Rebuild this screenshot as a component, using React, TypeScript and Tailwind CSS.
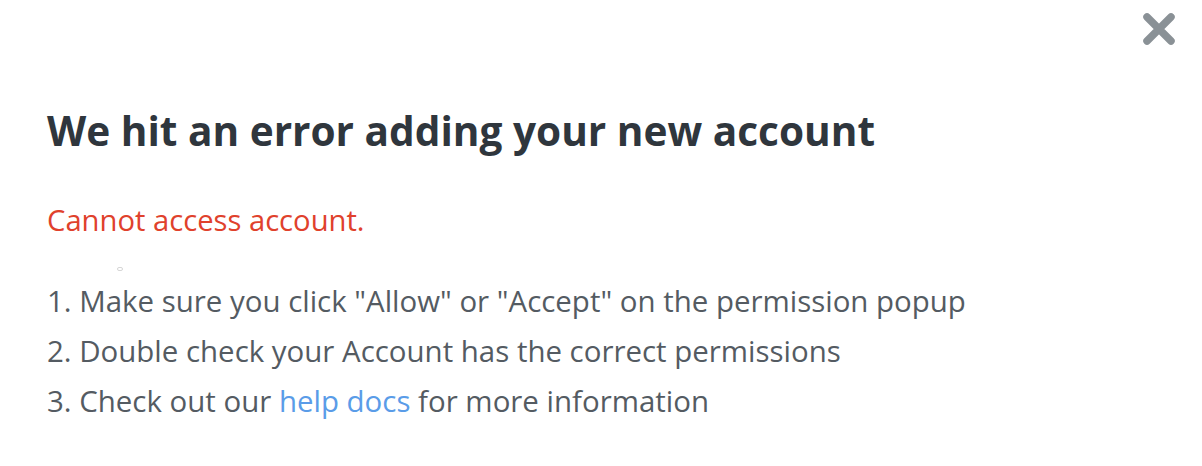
export default function App() {
  return (
    <div className="relative w-[1202px] h-[466px] bg-white overflow-hidden" style={{ fontFamily: '"Open Sans", sans-serif' }}>
      <button className="absolute right-[26px] top-[12px] w-[34px] h-[34px] flex items-center justify-center">
        <svg width="34" height="34" viewBox="0 0 34 34">
          <path d="M5 5 L29 29 M29 5 L5 29" stroke="#8a9196" strokeWidth="7.5" strokeLinecap="round" />
        </svg>
      </button>
      <div className="pl-[47px] pt-[106px] flex flex-col">
        <h1 className="text-[40.6px] font-bold text-[#2f363d] leading-[50px]">We hit an error adding your new account</h1>
        <p className="mt-[46px] text-[29.2px] text-[#e0412c] leading-[36px]">Cannot access account.</p>
        <div className="relative h-[38px]">
          <span className="absolute left-[70px] top-[29px] w-[6px] h-[4px] rounded-full border border-[#d6d6d6]" />
        </div>
        <ol className="text-[29.45px] text-[#545b62] leading-[50px]">
          <li>1. Make sure you click "Allow" or "Accept" on the permission popup</li>
          <li>2. Double check your Account has the correct permissions</li>
          <li>3. Check out our <a className="text-[#5a9ce8]">help docs</a> for more information</li>
        </ol>
      </div>
    </div>
  );
}
